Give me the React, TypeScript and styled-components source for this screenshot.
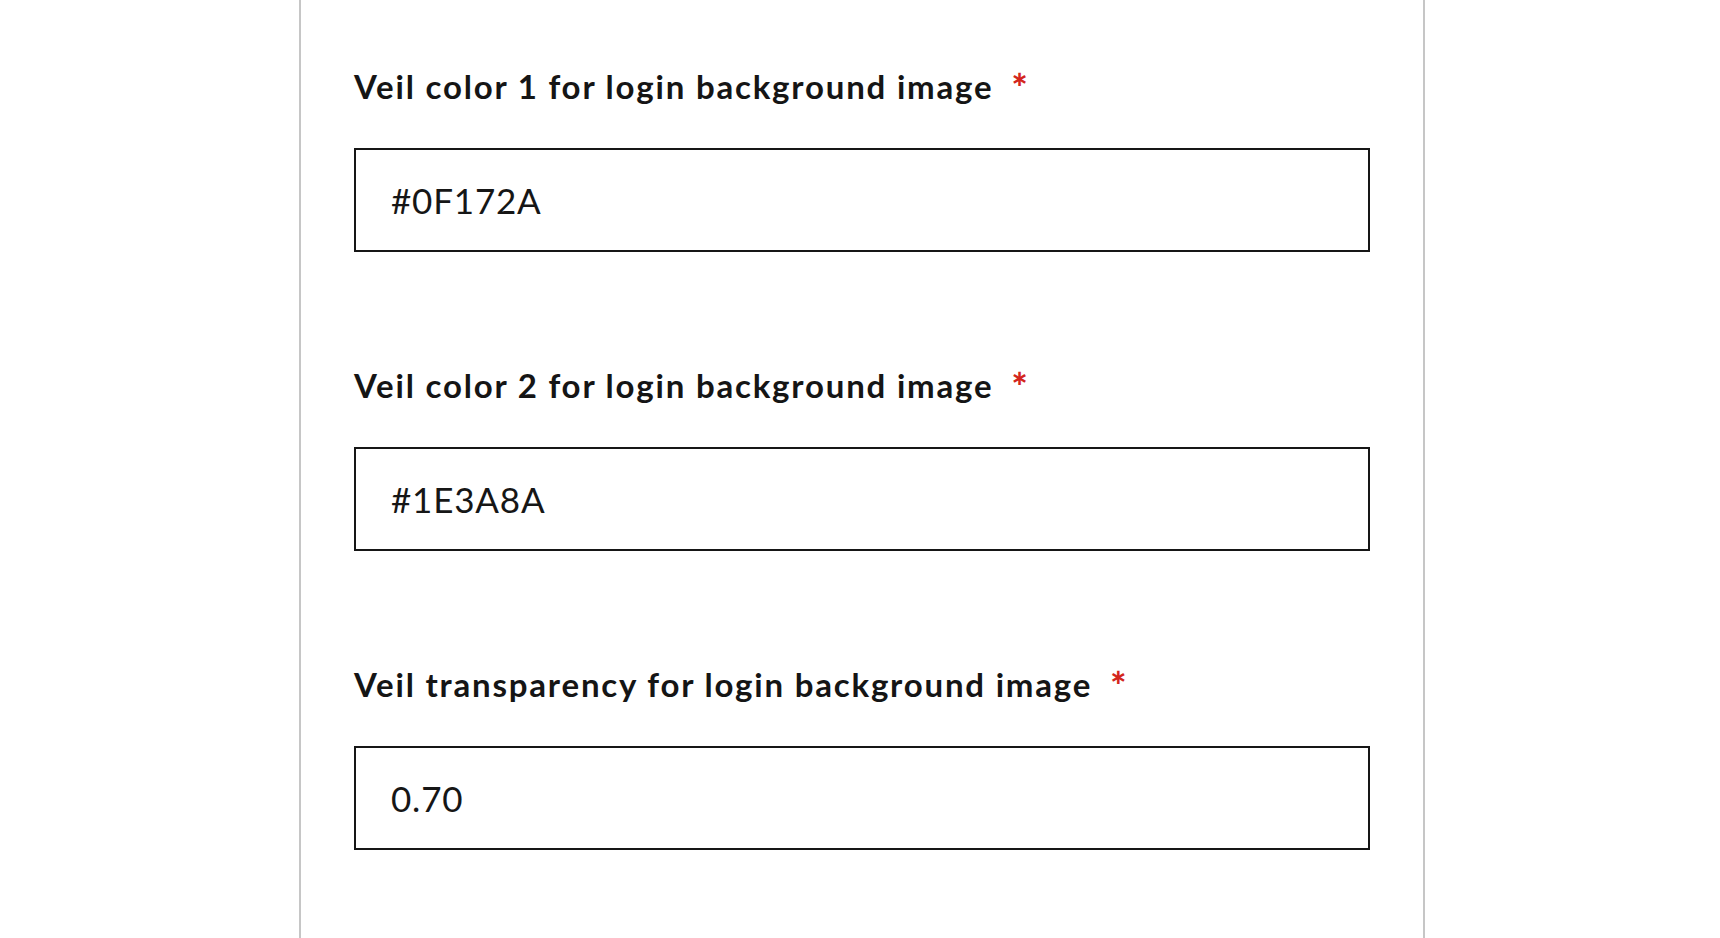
import styled, { createGlobalStyle } from "styled-components";

const fields = [
  { label: "Veil color 1 for login background image", value: "#0F172A" },
  { label: "Veil color 2 for login background image", value: "#1E3A8A" },
  { label: "Veil transparency for login background image", value: "0.70" },
];

export default function App() {
  return (
    <>
      <GlobalStyle />
      <Page>
        <Panel>
          {fields.map((f) => (
            <Field key={f.label}>
              <Label>
                {f.label}
                <Required>*</Required>
              </Label>
              <Input defaultValue={f.value} />
            </Field>
          ))}
        </Panel>
      </Page>
    </>
  );
}

const GlobalStyle = createGlobalStyle`
  html, body {
    margin: 0;
    padding: 0;
    background: #fff;
    height: 100%;
    overflow: hidden;
  }
  body {
    font-family: Lato, "Noto Sans", sans-serif;
    color: #161616;
  }
  #root {
    height: 100%;
  }
`;

const Page = styled.div`
  display: flex;
  justify-content: center;
  height: 100%;
  padding-left: 4px;
  box-sizing: border-box;
`;

const Panel = styled.main`
  width: 1126px;
  box-sizing: border-box;
  border-left: 2px solid #c6c6c6;
  border-right: 2px solid #c6c6c6;
  padding: 66px 53px 0;
  display: flex;
  flex-direction: column;
  gap: 113px;
`;

const Field = styled.div`
  display: flex;
  flex-direction: column;
  gap: 42px;
`;

const Label = styled.label`
  display: flex;
  align-items: flex-start;
  height: 40px;
  font-size: 33px;
  line-height: 40px;
  font-weight: 700;
  letter-spacing: 1.8px;
  color: #151515;
`;

const Required = styled.span`
  color: #d3261c;
  margin-left: 18px;
  padding-top: 3px;
  font-size: 38px;
  line-height: 37px;
  font-weight: 900;
`;

const Input = styled.input`
  height: 104px;
  box-sizing: border-box;
  border: 2px solid #161616;
  border-radius: 0;
  padding: 0 35px;
  font-family: Lato, "Noto Sans", sans-serif;
  font-size: 35px;
  letter-spacing: 0.8px;
  color: #161616;
  background: #fff;
  outline: none;
`;
